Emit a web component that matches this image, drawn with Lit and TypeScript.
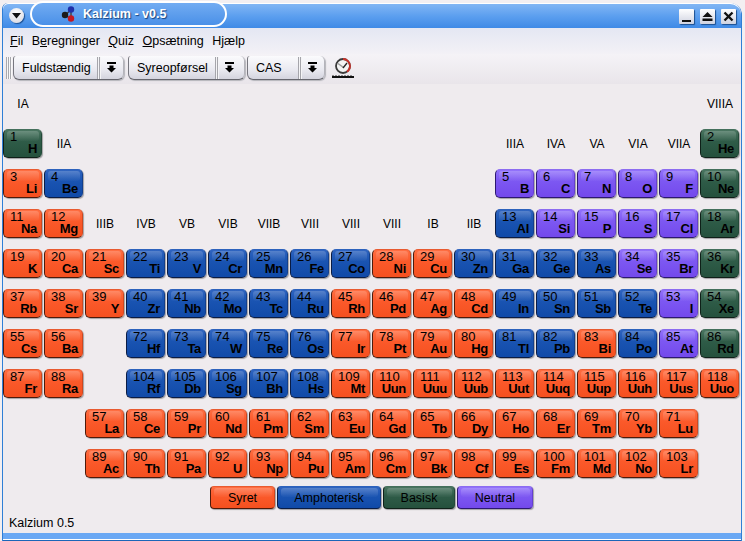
import { LitElement, css, html, svg } from "lit";
import { customElement } from "lit/decorators.js";

type Kind = "r" | "b" | "g" | "p";
// [number, symbol, kind, column, row], rows counted from the IA label row
type El = [number, string, Kind, number, number];

const rowOf = (start: number, col: number, row: number, spec: string): El[] =>
  spec.split(" ").map((s, i) => {
    const [sym, k] = s.split(":");
    return [start + i, sym, k as Kind, col + i, row];
  });

const ELEMENTS: El[] = [
  ...rowOf(1, 1, 2, "H:g"),
  ...rowOf(2, 18, 2, "He:g"),
  ...rowOf(3, 1, 3, "Li:r Be:b"),
  ...rowOf(5, 13, 3, "B:p C:p N:p O:p F:p Ne:g"),
  ...rowOf(11, 1, 4, "Na:r Mg:r"),
  ...rowOf(13, 13, 4, "Al:b Si:p P:p S:p Cl:p Ar:g"),
  ...rowOf(19, 1, 5, "K:r Ca:r Sc:r Ti:b V:b Cr:b Mn:b Fe:b Co:b Ni:r Cu:r Zn:b Ga:b Ge:b As:b Se:p Br:p Kr:g"),
  ...rowOf(37, 1, 6, "Rb:r Sr:r Y:r Zr:b Nb:b Mo:b Tc:b Ru:b Rh:r Pd:r Ag:r Cd:r In:b Sn:b Sb:b Te:b I:p Xe:g"),
  ...rowOf(55, 1, 7, "Cs:r Ba:r"),
  ...rowOf(72, 4, 7, "Hf:b Ta:b W:b Re:b Os:b Ir:r Pt:r Au:r Hg:r Tl:b Pb:b Bi:r Po:b At:p Rd:g"),
  ...rowOf(87, 1, 8, "Fr:r Ra:r"),
  ...rowOf(104, 4, 8, "Rf:b Db:b Sg:b Bh:b Hs:b Mt:r Uun:r Uuu:r Uub:r Uut:r Uuq:r Uup:r Uuh:r Uus:r Uuo:r"),
  ...rowOf(57, 3, 9, "La:r Ce:r Pr:r Nd:r Pm:r Sm:r Eu:r Gd:r Tb:r Dy:r Ho:r Er:r Tm:r Yb:r Lu:r"),
  ...rowOf(89, 3, 10, "Ac:r Th:r Pa:r U:r Np:r Pu:r Am:r Cm:r Bk:r Cf:r Es:r Fm:r Md:r No:r Lr:r"),
];

const GROUPS: [string, number, number][] = [
  ["IA", 1, 1], ["VIIIA", 18, 1], ["IIA", 2, 2], ["IIIA", 13, 2], ["IVA", 14, 2], ["VA", 15, 2], ["VIA", 16, 2], ["VIIA", 17, 2],
  ["IIIB", 3, 4], ["IVB", 4, 4], ["VB", 5, 4], ["VIB", 6, 4], ["VIIB", 7, 4], ["VIII", 8, 4], ["VIII", 9, 4], ["VIII", 10, 4], ["IB", 11, 4], ["IIB", 12, 4],
];

const dropArrow = svg`<svg class="arrow" width="11" height="11" viewBox="0 0 11 11"><path d="M1 0h9v2H1zM3.5 3.5h4V6H10L5.5 10.5 1 6h2.5z" fill="#000"/></svg>`;

@customElement("app-root")
export class AppRoot extends LitElement {
  static styles = css`
    :host {
      display: block;
      width: 745px;
      height: 541px;
      background: #f3eff1;
      font-family: "Liberation Sans", Arial, sans-serif;
      font-size: 12.5px;
      color: #000;
      overflow: hidden;
    }
    .window {
      position: relative;
      top: 3px;
      width: 738px;
      margin-left: 2px;
      height: 538px;
      display: flex;
      flex-direction: column;
      background: #efebee;
      border-left: 1px solid #2f7fd6;
      border-right: 1px solid #2f7fd6;
      border-radius: 6px 12px 0 0;
    }
    .title {
      height: 25px;
      box-sizing: border-box;
      flex: none;
      display: flex;
      align-items: center;
      justify-content: flex-end;
      gap: 6px;
      padding-right: 5px;
      border-top: 1px solid #fff;
      border-radius: 6px 11px 0 0;
      background: linear-gradient(#82b6f4, #5c9fef 50%, #3f8ae6);
    }
    .tab {
      position: absolute;
      top: -2px;
      left: 27px;
      width: 197px;
      height: 26px;
      box-sizing: border-box;
      border: 2px solid #fff;
      border-radius: 13px;
      background: linear-gradient(#72acf2, #4a90e8);
      display: flex;
      align-items: center;
      gap: 5px;
      padding-left: 29px;
      color: #fff;
      font-weight: bold;
      text-shadow: 1px 1px 1px #16447e;
    }
    .menu-btn {
      position: absolute;
      left: 6px;
      top: 5px;
      width: 15px;
      height: 15px;
      border-radius: 50%;
      background: radial-gradient(circle at 50% 30%, #fff, #d3d3dc);
      box-shadow: 1px 1px 1px #1c4f90;
      display: flex;
      align-items: center;
      justify-content: center;
    }
    .win-btn {
      width: 15px;
      height: 15px;
      background: linear-gradient(#fff, #cfd2e0);
      box-shadow: 1px 1px 1px #1c4f90;
      border-radius: 1px;
    }
    .win-btn svg {
      display: block;
    }
    .menubar {
      height: 26px;
      flex: none;
      display: flex;
      align-items: center;
      gap: 8.5px;
      padding-left: 7px;
      background: linear-gradient(#e4e7f3, #f3f1f6);
    }
    .toolbar {
      height: 30px;
      box-sizing: border-box;
      flex: none;
      display: flex;
      align-items: center;
      gap: 2px;
      padding: 0 0 2px 3px;
      background: linear-gradient(#f5f3f7, #e9e5ea);
    }
    .grip {
      width: 6px;
      height: 22px;
      margin-right: -1px;
      background: repeating-linear-gradient(90deg, #a9a9ae 0 1px, #f8f8f8 1px 2px);
    }
    .combo {
      height: 24px;
      box-sizing: border-box;
      display: flex;
      align-items: center;
      border-left: 1px solid #77777f;
      border-right: 1px solid #b4b4bb;
      border-bottom: 1px solid #66666e;
      border-radius: 3px 5px 6px 6px;
      background: linear-gradient(#fbfbfd, #e9e9f0 60%, #d4d4de);
      box-shadow: 1px 1px 1px #b5b5bb;
    }
    .combo span {
      flex: 1;
      padding-left: 8px;
    }
    .combo .sep {
      flex: none;
      width: 4px;
      height: 22px;
      background: repeating-linear-gradient(90deg, #a5a5ab 0 1px, #f4f4f6 1px 2px);
    }
    .combo .arrow {
      margin: 0 6px 0 5px;
      flex: none;
    }
    .first {
      margin-right: 2px;
    }
    .tool-icon {
      margin-left: 5px;
    }
    .grid {
      flex: none;
      display: grid;
      grid-template-columns: repeat(18, 39px);
      grid-template-rows: repeat(10, 29px);
      column-gap: 2px;
      row-gap: 11px;
      padding-top: 5px;
    }
    .group {
      display: flex;
      align-items: center;
      justify-content: center;
      font-size: 12px;
      padding: 1px 0 0 1px;
      white-space: nowrap;
    }
    .el,
    .legend div {
      position: relative;
      box-sizing: border-box;
      border: 1px solid var(--m);
      border-top-color: var(--t);
      border-bottom-color: var(--d);
      border-left-color: var(--d);
      box-shadow: 1px 1px 1px #a3a1a4;
      background: var(--bg);
    }
    .el {
      height: 29px;
      border-radius: 5px;
    }
    .el::before,
    .legend div::before {
      content: "";
      position: absolute;
      left: 3px;
      right: 2px;
      top: 1px;
      height: 10px;
      border-radius: 3px;
      background: linear-gradient(rgba(255, 255, 255, 0.2), rgba(255, 255, 255, 0.02));
    }
    .num {
      position: absolute;
      left: 6px;
      top: 1px;
      font-size: 13px;
      line-height: 12px;
    }
    .sym {
      position: absolute;
      right: 4px;
      bottom: 2px;
      font-weight: bold;
      font-size: 13px;
      line-height: 12px;
      letter-spacing: -0.3px;
    }
    .r { --bg: linear-gradient(#ff6e42, #fb5a2b 40%, #f5501f); --t: #e85a30; --m: #d04820; --d: #4d1a0a; }
    .b { --bg: linear-gradient(#2f64c0, #1a54b2 40%, #104aa8); --t: #2d62bc; --m: #123f8c; --d: #0a1c44; }
    .g { --bg: linear-gradient(#4a7560, #2f5c48 40%, #25513d); --t: #45705c; --m: #224a38; --d: #0f2018; }
    .p { --bg: linear-gradient(#9272fb, #7d58f2 40%, #7349ec); --t: #8c6cf0; --m: #6540d0; --d: #2c1870; }
    .legend {
      flex: none;
      display: flex;
      gap: 2px;
      margin: 8px 0 0 207px;
    }
    .legend div {
      height: 23px;
      border-radius: 4px;
      display: flex;
      align-items: center;
      justify-content: center;
    }
    .legend div::before {
      height: 9px;
    }
    .legend span {
      position: relative;
    }
    .status {
      flex: 1;
      display: flex;
      align-items: center;
      padding: 3px 0 0 6px;
    }
    .frame {
      flex: none;
      height: 8px;
      box-sizing: border-box;
      background: #6aa8f4;
      border-bottom: 1px solid #1c66b8;
      box-shadow: inset 0 -1px 0 #fff;
    }
  `;

  protected override render() {
    return html`
      <div class="window">
        <div class="title">
          <div class="win-btn"><svg width="15" height="15" viewBox="0 0 15 15"><path d="M3 11h9v2H3z" fill="#111" /></svg></div>
          <div class="win-btn"><svg width="15" height="15" viewBox="0 0 15 15"><path d="M7.5 3l5 5h-10zM2.500 9.500h10v2.500h-10z" fill="#111" /></svg></div>
          <div class="win-btn"><svg width="15" height="15" viewBox="0 0 15 15"><path d="M3.500 3.500l8 8M11.500 3.500l-8 8" stroke="#111" stroke-width="2.400" /></svg></div>
        </div>
        <div class="menu-btn">
          <svg width="9" height="6" viewBox="0 0 9 6"><path d="M0 0h9L4.500 5.500z" fill="#111" /></svg>
        </div>
        <div class="tab">
          <svg width="17" height="16" viewBox="0 0 17 16">
            <path d="M4 9L10 4M4 9l6 4M10 4v9" stroke="#444" stroke-width="1.500" />
            <circle cx="4" cy="9" r="3.200" fill="#1c1c1c" />
            <circle cx="10" cy="3.500" r="3.200" fill="#1f2fa8" />
            <circle cx="10" cy="12.500" r="3.200" fill="#c41822" />
          </svg>
          Kalzium - v0.5
        </div>
        <div class="menubar">
          <span><u>F</u>il</span><span>B<u>e</u>regninger</span><span><u>Q</u>uiz</span><span><u>O</u>psætning</span><span>H<u>j</u>ælp</span>
        </div>
        <div class="toolbar">
          <div class="grip"></div>
          <div class="combo first" style="width:111px"><span>Fuldstændig</span><i class="sep"></i>${dropArrow}</div>
          <div class="combo" style="width:117px;padding-right:3px"><span>Syreopførsel</span><i class="sep"></i>${dropArrow}</div>
          <div class="combo" style="width:78px"><span>CAS</span><i class="sep"></i>${dropArrow}</div>
          <svg class="tool-icon" width="22" height="21" viewBox="0 0 22 21">
            <circle cx="11" cy="8" r="7" fill="#f4f4f4" stroke="#3a3a3a" stroke-width="1.800" />
            <path d="M11 1a7 7 0 0 1 7 7 7 7 0 0 1-3 5.700" fill="none" stroke="#c8322a" stroke-width="1.800" />
            <path d="M6 5.500l5.500 4" stroke="#999" stroke-width="1.500" />
            <path d="M11 10l4-5" stroke="#222" stroke-width="1.300" />
            <path d="M0 18h22v2H0z" fill="#111" />
            <path d="M1 17v1M4 17v1M7 17v1M10 17v1M13 17v1M16 17v1M19 17v1" stroke="#333" />
          </svg>
        </div>
        <div class="grid">
          ${GROUPS.map(
            ([t, c, r]) => html`<div class="group" style="grid-column:${c};grid-row:${r}">${t}</div>`,
          )}
          ${ELEMENTS.map(
            ([n, s, k, c, r]) => html`<div class="el ${k}" style="grid-column:${c};grid-row:${r}">
              <span class="num">${n}</span><span class="sym">${s}</span>
            </div>`,
          )}
        </div>
        <div class="legend">
          <div class="r" style="width:65px"><span>Syret</span></div>
          <div class="b" style="width:104px"><span>Amphoterisk</span></div>
          <div class="g" style="width:72px"><span>Basisk</span></div>
          <div class="p" style="width:76px"><span>Neutral</span></div>
        </div>
        <div class="status">Kalzium 0.5</div>
        <div class="frame"></div>
      </div>
    `;
  }
}
